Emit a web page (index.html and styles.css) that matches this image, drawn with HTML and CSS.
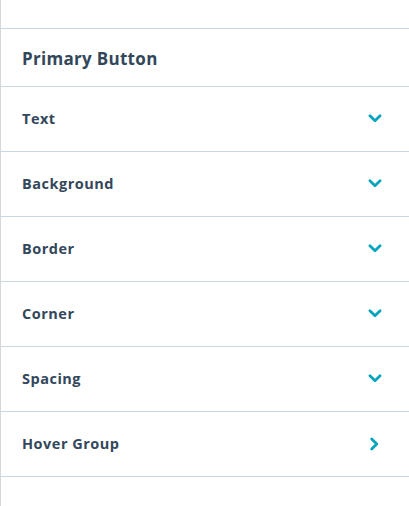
FILE: index.html
```html
<!DOCTYPE html>
<html>
<head>
<meta charset="utf-8">
<link rel="stylesheet" href="styles.css">
</head>
<body>
<div class="panel">
  <div class="top"><span class="top-title">Editing</span></div>
  <div class="section-head">Primary Button</div>
  <div class="row"><span class="label">Text</span><svg class="chev" viewBox="0 0 12 8"><path d="M1.5 1.5 L6 6 L10.5 1.5"/></svg></div>
  <div class="row"><span class="label">Background</span><svg class="chev" viewBox="0 0 12 8"><path d="M1.5 1.5 L6 6 L10.5 1.5"/></svg></div>
  <div class="row"><span class="label">Border</span><svg class="chev" viewBox="0 0 12 8"><path d="M1.5 1.5 L6 6 L10.5 1.5"/></svg></div>
  <div class="row"><span class="label">Corner</span><svg class="chev" viewBox="0 0 12 8"><path d="M1.5 1.5 L6 6 L10.5 1.5"/></svg></div>
  <div class="row"><span class="label">Spacing</span><svg class="chev" viewBox="0 0 12 8"><path d="M1.5 1.5 L6 6 L10.5 1.5"/></svg></div>
  <div class="row"><span class="label">Hover Group</span><svg class="chev right" viewBox="0 0 8 12"><path d="M1.5 1.5 L6 6 L1.5 10.5"/></svg></div>
  <div class="rest"></div>
</div>
</body>
</html>
```
FILE: styles.css
```css
html, body {
  margin: 0;
  padding: 0;
  background: #fff;
}
body {
  font-family: "Open Sans", "Lato", sans-serif;
  color: #33475b;
}
.panel {
  width: 409px;
  height: 506px;
  border-left: 1px solid #d6d6d6;
  box-sizing: border-box;
  overflow: hidden;
}
.top {
  height: 29px;
  box-sizing: border-box;
  border-bottom: 1px solid #cbd6e2;
  overflow: hidden;
  display: flex;
  justify-content: center;
}
.top-title {
  font-size: 18px;
  font-weight: 700;
  line-height: 22px;
  margin-top: -22px;
  margin-left: -44px;
}
.section-head {
  border-bottom: 1px solid #cbd6e2;
  box-sizing: border-box;
  height: 58px;
  padding-left: 21px;
  display: flex;
  align-items: center;
  font-size: 17px;
  font-weight: 700;
  letter-spacing: 0.3px;
  padding-top: 1px;
}
.row {
  height: 65px;
  box-sizing: border-box;
  border-bottom: 1px solid #cbd6e2;
  display: flex;
  align-items: center;
  justify-content: space-between;
  padding-left: 21px;
  padding-right: 27px;
}
.label {
  font-size: 14.5px;
  font-weight: 700;
  letter-spacing: 0.5px;
  margin-top: -2px;
}
.chev {
  width: 14px;
  height: 9px;
  fill: none;
  stroke: #00a4bd;
  stroke-width: 2.4;
  stroke-linecap: round;
  stroke-linejoin: round;
  margin-top: -1px;
}
.chev.right {
  width: 9px;
  height: 14px;
  margin-right: 3px;
}
```
